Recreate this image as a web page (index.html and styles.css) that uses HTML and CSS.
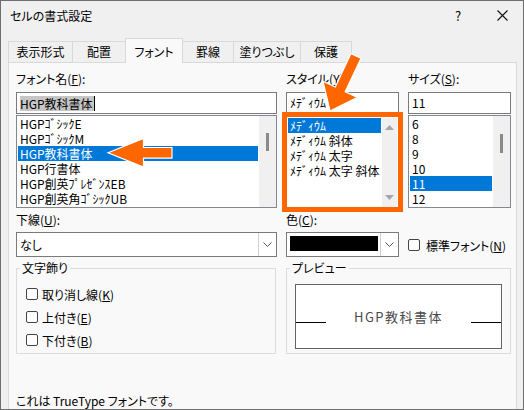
FILE: index.html
```html
<!DOCTYPE html>
<html lang="ja">
<head>
<meta charset="utf-8">
<title>セルの書式設定</title>
<link rel="stylesheet" href="styles.css">
</head>
<body>
<div class="window">
  <div class="titlebar">
    <span class="title">セルの書式設定</span>
    <span class="tb-btn help">?</span>
    <span class="tb-btn close"><svg width="11" height="11" viewBox="0 0 11 11"><path d="M0.5 0.5L10.5 10.5M10.5 0.5L0.5 10.5" stroke="#111" stroke-width="1.1" fill="none"/></svg></span>
  </div>
  <div class="tabs">
    <div class="tab t1">表示形式</div>
    <div class="tab t2">配置</div>
    <div class="tab t3 active">フォント</div>
    <div class="tab t4">罫線</div>
    <div class="tab t5">塗りつぶし</div>
    <div class="tab t6">保護</div>
  </div>
  <div class="panel">
    <div class="cols">
      <div class="field">
        <div class="label">フォント名(<u>F</u>):</div>
        <div class="input"><span class="seltext">HGP教科書体</span><span class="caret"></span></div>
        <div class="list">
          <div class="items">
            <div class="item">HGPｺﾞｼｯｸE</div>
            <div class="item">HGPｺﾞｼｯｸM</div>
            <div class="item sel">HGP教科書体</div>
            <div class="item">HGP行書体</div>
            <div class="item">HGP創英ﾌﾟﾚｾﾞﾝｽEB</div>
            <div class="item">HGP創英角ｺﾞｼｯｸUB</div>
          </div>
          <div class="scroll"><div class="thumb t-font"></div></div>
        </div>
      </div>
      <div class="field">
        <div class="label">スタイル(<u>Y</u>):</div>
        <div class="input">ﾒﾃﾞｨｳﾑ</div>
        <div class="list style-list">
          <div class="items">
            <div class="item sel">ﾒﾃﾞｨｳﾑ</div>
            <div class="item">ﾒﾃﾞｨｳﾑ 斜体</div>
            <div class="item">ﾒﾃﾞｨｳﾑ 太字</div>
            <div class="item">ﾒﾃﾞｨｳﾑ 太字 斜体</div>
          </div>
          <div class="scroll arrows-scroll">
            <svg width="9" height="5" viewBox="0 0 9 5"><polygon points="0,5 4.5,0 9,5" fill="#a6a6a6"/></svg>
            <svg width="9" height="5" viewBox="0 0 9 5"><polygon points="0,0 4.5,5 9,0" fill="#a6a6a6"/></svg>
          </div>
        </div>
      </div>
      <div class="field">
        <div class="label">サイズ(<u>S</u>):</div>
        <div class="input">11</div>
        <div class="list">
          <div class="items">
            <div class="item">6</div>
            <div class="item">8</div>
            <div class="item">9</div>
            <div class="item">10</div>
            <div class="item sel">11</div>
            <div class="item">12</div>
          </div>
          <div class="scroll"><div class="thumb t-size"></div></div>
        </div>
      </div>
    </div>

    <div class="cols row2">
      <div class="field">
        <div class="label2">下線(<u>U</u>):</div>
        <div class="combo">
          <div class="combo-val">なし</div>
          <div class="combo-btn"><svg width="9" height="5" viewBox="0 0 9 5"><polyline points="0.5,0.5 4.5,4.5 8.5,0.5" fill="none" stroke="#555" stroke-width="1"/></svg></div>
        </div>
      </div>
      <div class="field">
        <div class="label2">色(<u>C</u>):</div>
        <div class="combo">
          <div class="swatch"></div>
          <div class="combo-btn"><svg width="9" height="5" viewBox="0 0 9 5"><polyline points="0.5,0.5 4.5,4.5 8.5,0.5" fill="none" stroke="#555" stroke-width="1"/></svg></div>
        </div>
      </div>
      <div class="field">
        <div class="check std"><span class="box"></span><span>標準フォント(<u>N</u>)</span></div>
      </div>
    </div>

    <div class="groups">
      <fieldset class="group">
        <legend>文字飾り</legend>
        <div class="checks">
          <div class="check"><span class="box"></span><span>取り消し線(<u>K</u>)</span></div>
          <div class="check"><span class="box"></span><span>上付き(<u>E</u>)</span></div>
          <div class="check"><span class="box"></span><span>下付き(<u>B</u>)</span></div>
        </div>
      </fieldset>
      <fieldset class="group">
        <legend>プレビュー</legend>
        <div class="preview">
          <span class="pline"></span>
          <span class="ptext">HGP教科書体</span>
          <span class="pline"></span>
        </div>
      </fieldset>
    </div>

    <div class="note">これは TrueType フォントです。</div>
  </div>

  <svg class="callouts" width="524" height="410" viewBox="0 0 524 410">
    <polygon points="108,152.8 143.5,138.5 143.5,147.5 172,147.5 172,158.2 143.5,158.2 143.5,167" fill="#ff6600" stroke="#fff" stroke-width="1.2" stroke-linejoin="miter"/>
    <polygon points="330,111 357.5,97.4 345.2,91.6 361,58.3 351,53.6 335.3,86.9 323,81.2" fill="#ff6600" stroke="#fff" stroke-width="1.2"/>
  </svg>
</div>
</body>
</html>
```

FILE: styles.css
```css
* { box-sizing: border-box; }
html, body { margin: 0; padding: 0; }
body {
  font-family: "Noto Sans CJK JP", "Noto Sans", sans-serif;
  font-size: 12px;
  color: #000;
  font-feature-settings: "palt";
  background: #fff;
}
u { text-underline-offset: 1px; }

.window {
  position: relative;
  width: 524px;
  height: 410px;
  border: 1px solid #6e6e6e;
  background: #f0f0f0;
  overflow: hidden;
}

.titlebar { height: 29px; display: flex; align-items: center; }
.title { flex: 1; padding-left: 9px; line-height: 16px; }
.tb-btn { height: 29px; display: flex; align-items: center; justify-content: center; }
.help { width: 46px; font-size: 13px; }
.close { width: 42px; }

.tabs {
  display: flex;
  align-items: flex-end;
  height: 24px;
  margin: 8px 0 0 7px;
  position: relative;
  z-index: 2;
}
.tab {
  height: 21px;
  border: 1px solid #d9d9d9;
  border-bottom: none;
  margin-right: -1px;
  display: flex;
  align-items: center;
  justify-content: center;
  background: #f0f0f0;
  line-height: 16px;
  white-space: nowrap;
}
.tab.active {
  height: 25px;
  margin-bottom: -1px;
  padding-top: 1px;
  background: #f9f9f9;
  position: relative;
  z-index: 1;
}
.t1 { width: 65px; }
.t2 { width: 54px; }
.t3 { width: 58px; }
.t4 { width: 52px; }
.t5 { width: 68px; }
.t6 { width: 52px; }

.panel {
  margin-left: 7px;
  width: 509px;
  height: 360px;
  border: 1px solid #d9d9d9;
  background: #f9f9f9;
  padding: 7px 0 0 7px;
}

.cols {
  display: grid;
  grid-template-columns: 261px 113px 103px;
  column-gap: 9px;
}
.field { display: flex; flex-direction: column; }
.label { height: 22px; line-height: 18px; white-space: nowrap; }
.label2 { height: 24px; line-height: 24px; white-space: nowrap; }

.input {
  height: 22px;
  border: 1px solid #7a7a7a;
  background: #fff;
  padding-left: 3px;
  line-height: 20px;
  margin-bottom: 1px;
  white-space: nowrap;
  display: flex;
  align-items: center;
}
.seltext { background: #c6c6c6; line-height: 15px; padding: 0 1px 0 0; }
.caret { width: 1px; height: 15px; background: #000; }

.list {
  height: 93px;
  border: 1px solid #828790;
  background: #fff;
  display: flex;
}
.items { flex: 1; padding: 0 1px; overflow: hidden; }
.item {
  height: 15px;
  line-height: 15px;
  padding-left: 2px;
  white-space: nowrap;
  overflow: hidden;
}
.item.sel { background: #0078d7; color: #fff; }

.scroll {
  width: 17px;
  background: #f0f0f0;
  display: flex;
  flex-direction: column;
  align-items: center;
}
.thumb { width: 3px; background: #8a8a8a; }
.t-font { margin-top: 17px; height: 18px; }
.t-size { margin-top: 18px; height: 19px; }

.style-list {
  height: 100px;
  margin: -3px -4px -4px;
  border: 5px solid #ff6600;
  position: relative;
  z-index: 1;
}
.style-list .items { padding-top: 1px; }
.arrows-scroll {
  width: 15px;
  margin: 1px 1px 0 0;
  justify-content: space-between;
  padding: 7px 0 7px;
}

.combo {
  height: 25px;
  border: 1px solid #7a7a7a;
  background: #fff;
  display: flex;
}
.combo-val { flex: 1; padding-left: 3px; line-height: 23px; }
.combo-btn {
  width: 18px;
  border-left: 1px solid #cfcfcf;
  display: flex;
  align-items: center;
  justify-content: center;
  margin-left: auto;
}
.swatch {
  width: 88px;
  height: 15px;
  margin: 3px 0 0 3px;
  background: #000;
}

.check {
  height: 18px;
  display: flex;
  align-items: center;
  gap: 4px;
  white-space: nowrap;
}
.box {
  width: 12px;
  height: 12px;
  border: 1px solid #444;
  border-radius: 2px;
  background: #fdfdfd;
  flex: none;
}
.std { margin-top: 28px; gap: 6px; }

.groups {
  display: grid;
  grid-template-columns: 260px 225px;
  column-gap: 10px;
  margin-top: 3px;
}
.group {
  border: 1px solid #dcdcdc;
  margin: 0;
  padding: 0 0 4px 0;
  min-width: 0;
}
.group legend {
  padding: 0 2px;
  margin-left: 3px;
  line-height: 16px;
}
.checks {
  display: flex;
  flex-direction: column;
  gap: 5px;
  padding: 9px 0 0 9px;
}

.preview {
  margin: 8px 8px 0 8px;
  height: 65px;
  border: 1px solid #646464;
  background: #fff;
  display: flex;
  align-items: flex-start;
}
.pline { width: 30px; height: 1px; background: #000; margin-top: 37px; flex: none; }
.ptext {
  flex: 1;
  text-align: center;
  margin-top: 24px;
  line-height: 16px;
  font-size: 13px;
  letter-spacing: 1.5px;
  color: #4a4a4a;
}

.note { margin-top: 39px; line-height: 16px; }

.callouts {
  position: absolute;
  left: -1px;
  top: -1px;
  pointer-events: none;
  z-index: 5;
}
```
